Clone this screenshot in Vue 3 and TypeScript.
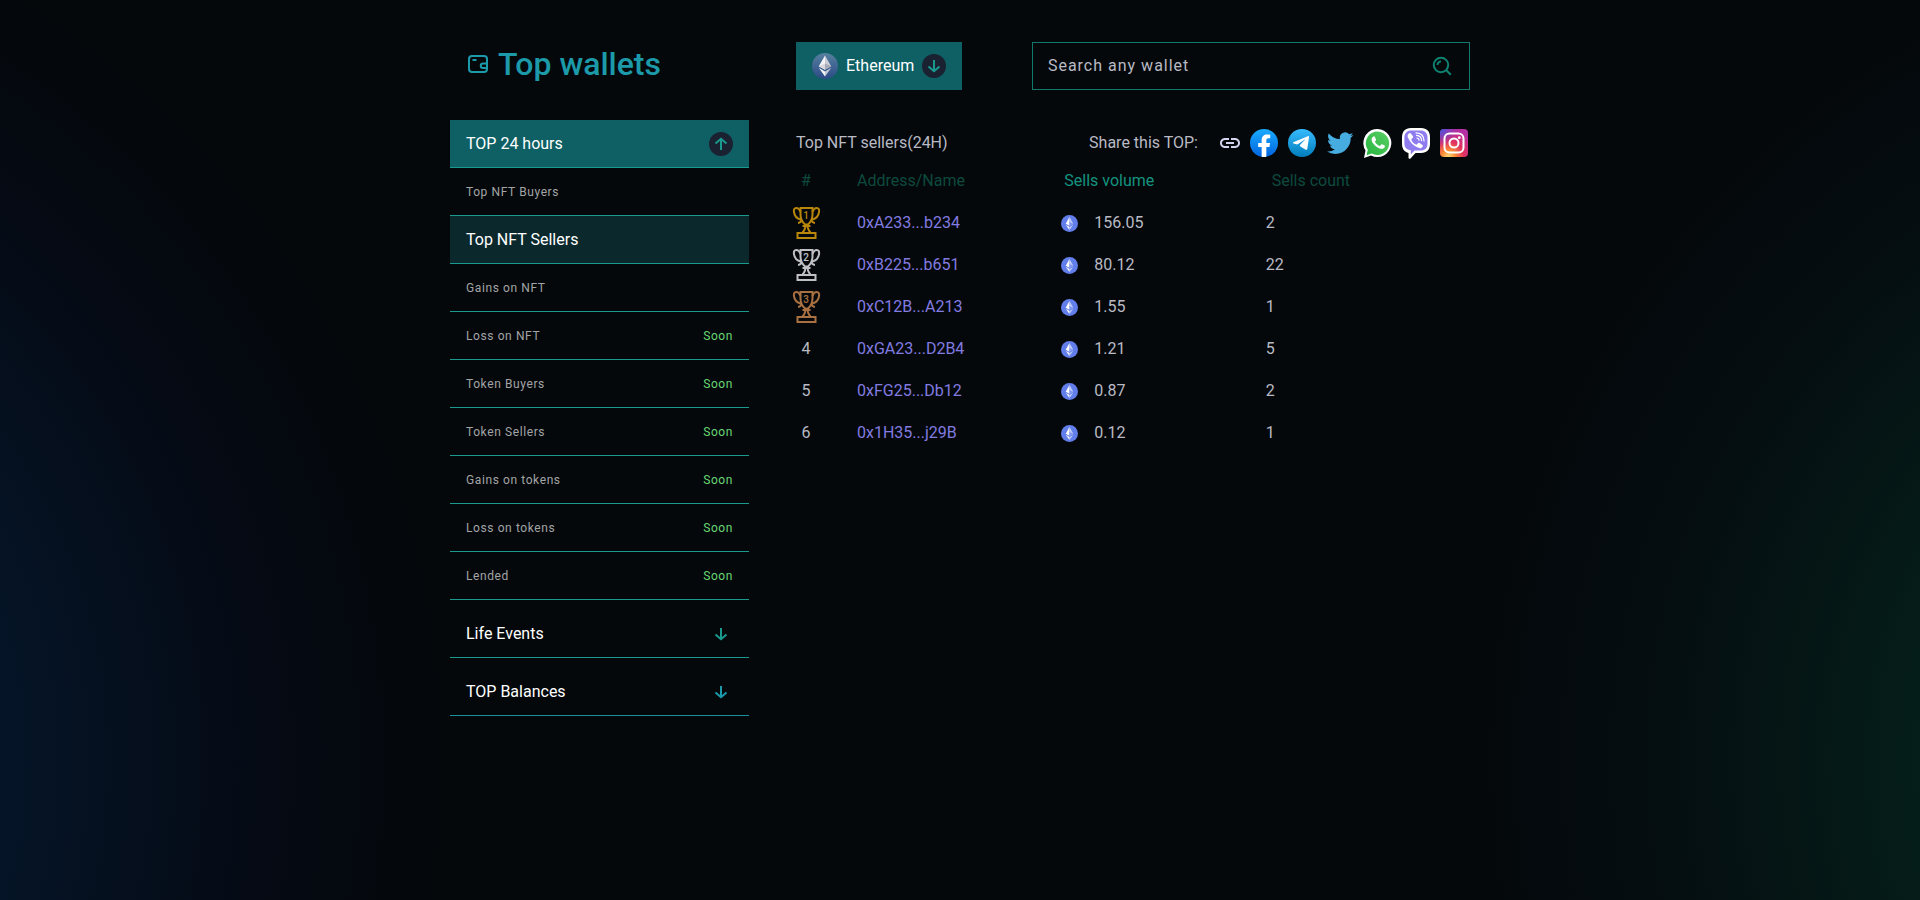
<script setup lang="ts">
import { ref } from 'vue'

interface MenuItem {
  label: string
  soon: boolean
}

interface Wallet {
  rank: number
  address: string
  volume: string
  count: number
}

const items: MenuItem[] = [
  { label: 'Top NFT Buyers', soon: false },
  { label: 'Top NFT Sellers', soon: false },
  { label: 'Gains on NFT', soon: false },
  { label: 'Loss on NFT', soon: true },
  { label: 'Token Buyers', soon: true },
  { label: 'Token Sellers', soon: true },
  { label: 'Gains on tokens', soon: true },
  { label: 'Loss on tokens', soon: true },
  { label: 'Lended', soon: true },
]

const wallets: Wallet[] = [
  { rank: 1, address: '0xA233...b234', volume: '156.05', count: 2 },
  { rank: 2, address: '0xB225...b651', volume: '80.12', count: 22 },
  { rank: 3, address: '0xC12B...A213', volume: '1.55', count: 1 },
  { rank: 4, address: '0xGA23...D2B4', volume: '1.21', count: 5 },
  { rank: 5, address: '0xFG25...Db12', volume: '0.87', count: 2 },
  { rank: 6, address: '0x1H35...j29B', volume: '0.12', count: 1 },
]

const selected = ref('Top NFT Sellers')
const query = ref('')

function select(item: MenuItem) {
  if (!item.soon) selected.value = item.label
}
</script>

<template>
  <div class="page">
    <div class="container">
      <aside class="side">
        <h1 class="title">
          <svg class="title-icon" viewBox="0 0 20 18" aria-hidden="true">
            <rect x="1" y="1" width="18" height="16" rx="3" />
            <path d="M4.500 5h4" />
            <path d="M19 8.500h-4a2.200 2.200 0 0 0 0 4.500h4" />
          </svg>
          Top wallets
        </h1>
        <nav class="menu">
          <button class="group open" type="button" aria-expanded="true">
            TOP 24 hours
            <svg class="arrow" viewBox="0 0 24 24" aria-hidden="true">
              <circle cx="12" cy="12" r="12" />
              <path d="M12 18V7M6.500 11.600L12 6.800l5.500 4.800" />
            </svg>
          </button>
          <a
            v-for="item in items"
            :key="item.label"
            href="#"
            class="item"
            :class="{ selected: item.label === selected }"
            @click.prevent="select(item)"
          >
            {{ item.label }}
            <span v-if="item.soon" class="soon">Soon</span>
          </a>
          <button class="group closed" type="button" aria-expanded="false">
            Life Events
            <svg class="arrow" viewBox="0 0 24 24" aria-hidden="true">
              <path d="M12 6v11M6.500 12.400L12 17.200l5.500-4.800" />
            </svg>
          </button>
          <button class="group closed last" type="button" aria-expanded="false">
            TOP Balances
            <svg class="arrow" viewBox="0 0 24 24" aria-hidden="true">
              <path d="M12 6v11M6.500 12.400L12 17.200l5.500-4.800" />
            </svg>
          </button>
        </nav>
      </aside>

      <main class="main">
        <div class="tools">
          <button class="chain" type="button" aria-haspopup="listbox">
            <svg class="chain-logo" viewBox="0 0 26 26" aria-hidden="true">
              <defs>
                <linearGradient id="chain-bg" x1="0" y1="0" x2="0" y2="1">
                  <stop offset="0" stop-color="#56809f" />
                  <stop offset="1" stop-color="#2c4a86" />
                </linearGradient>
              </defs>
              <circle cx="13" cy="13" r="13" fill="url(#chain-bg)" />
              <path d="M13 2.500L6.800 13.200 13 16.800z" fill="#f4f4f6" />
              <path d="M13 2.500l6.200 10.700L13 16.800z" fill="#c9ccd6" />
              <path d="M13 10.400l-6.200 2.800 6.200 3.600z" fill="#d9dae0" />
              <path d="M13 10.400l6.200 2.800-6.200 3.600z" fill="#a6a9b8" />
              <path d="M6.800 14.800L13 23.500v-5z" fill="#f4f4f6" />
              <path d="M19.200 14.800L13 23.500v-5z" fill="#c9ccd6" />
            </svg>
            Ethereum
            <svg class="arrow" viewBox="0 0 24 24" aria-hidden="true">
              <circle cx="12" cy="12" r="12" />
              <path d="M12 6v11M6.500 12.400L12 17.200l5.500-4.800" />
            </svg>
          </button>
          <form class="search" role="search" @submit.prevent>
            <input v-model="query" type="text" placeholder="Search any wallet" aria-label="Search any wallet" />
            <button type="submit" aria-label="Search">
              <svg viewBox="0 0 24 24" aria-hidden="true">
                <circle cx="11" cy="11" r="7.200" />
                <path d="M16.300 16.300l4.500 4.500M7.500 11A3.500 3.500 0 0 1 11 7.500" />
              </svg>
            </button>
          </form>
        </div>

        <div class="heading">
          <h2>Top NFT sellers(24H)</h2>
          <div class="share">
            <span class="share-label">Share this TOP:</span>
            <button class="link" type="button" aria-label="Copy link">
              <svg viewBox="0 0 24 24">
                <path
                  fill="#d6d3ee"
                  d="M3.900 12c0-1.710 1.390-3.100 3.100-3.100h4V7H7c-2.760 0-5 2.240-5 5s2.240 5 5 5h4v-1.900H7c-1.710 0-3.100-1.390-3.100-3.100zM8 13h8v-2H8v2zm9-6h-4v1.900h4c1.710 0 3.100 1.390 3.100 3.100s-1.390 3.100-3.100 3.100h-4V17h4c2.760 0 5-2.240 5-5s-2.240-5-5-5z"
                />
              </svg>
            </button>
            <a href="#" aria-label="Facebook">
              <svg viewBox="0 0 32 32">
                <defs>
                  <linearGradient id="fb" x1="0" y1="0" x2="0" y2="1">
                    <stop offset="0" stop-color="#18acfe" />
                    <stop offset="1" stop-color="#0163e0" />
                  </linearGradient>
                </defs>
                <circle cx="16" cy="16" r="14" fill="url(#fb)" />
                <path
                  transform="translate(2 2) scale(.778)"
                  fill="#fff"
                  d="M25 23l.8-5H21v-3.500c0-1.400.5-2.500 2.700-2.500H26V7.400c-1.300-.2-2.700-.4-4-.4-4.100 0-7 2.500-7 7v4h-4.500v5H15v12.700c1 .2 2 .3 3 .3s2-.1 3-.3V23h4z"
                />
              </svg>
            </a>
            <a href="#" aria-label="Telegram">
              <svg viewBox="0 0 32 32">
                <defs>
                  <linearGradient id="tg" x1="0" y1="0" x2="0" y2="1">
                    <stop offset="0" stop-color="#37bbfe" />
                    <stop offset="1" stop-color="#007dbb" />
                  </linearGradient>
                </defs>
                <circle cx="16" cy="16" r="14" fill="url(#tg)" />
                <path
                  fill="#fff"
                  d="M22.990 10.150c.1-.7-.57-1.250-1.220-.98L7.370 15.350c-.46.2-.43.880.05 1.030l2.970.94c.57.180 1.180.09 1.680-.25l6.690-4.620c.2-.14.420.150.250.320l-4.820 4.970c-.47.480-.37 1.300.19 1.650l5.390 3.380c.6.380 1.380 0 1.490-.71z"
                />
              </svg>
            </a>
            <a href="#" aria-label="Twitter">
              <svg viewBox="0 0 32 32">
                <path
                  transform="translate(3 3) scale(1.100)"
                  fill="#47acdf"
                  d="M23.953 4.570a10 10 0 01-2.825.775 4.958 4.958 0 002.163-2.723c-.951.555-2.005.959-3.127 1.184a4.920 4.920 0 00-8.384 4.482C7.690 8.095 4.067 6.130 1.640 3.162a4.822 4.822 0 00-.666 2.475c0 1.710.870 3.213 2.188 4.096a4.904 4.904 0 01-2.228-.616v.06a4.923 4.923 0 003.946 4.827 4.996 4.996 0 01-2.212.085 4.936 4.936 0 004.604 3.417 9.867 9.867 0 01-6.102 2.105c-.39 0-.779-.023-1.170-.067a13.995 13.995 0 007.557 2.209c9.053 0 13.998-7.496 13.998-13.985 0-.21 0-.42-.015-.63A9.935 9.935 0 0024 4.590z"
                />
              </svg>
            </a>
            <a href="#" aria-label="WhatsApp">
              <svg viewBox="0 0 32 32">
                <defs>
                  <linearGradient id="wa" x1="1" y1="0" x2="0" y2="1">
                    <stop offset="0" stop-color="#5bd066" />
                    <stop offset="1" stop-color="#27b43e" />
                  </linearGradient>
                </defs>
                <path d="M2 31l1.500-7.500A14 14 0 1 1 9 28.500z" fill="#fff" />
                <path d="M4.600 28.300l1.200-5.500A11.700 11.700 0 1 1 9.700 26.400z" fill="url(#wa)" />
                <path
                  transform="translate(3 2.500) scale(1.100)"
                  fill="#fff"
                  d="M17.472 14.382c-.297-.149-1.758-.867-2.030-.967-.273-.099-.471-.148-.67.15-.197.297-.767.966-.94 1.164-.173.199-.347.223-.644.075-.297-.15-1.255-.463-2.390-1.475-.883-.788-1.480-1.761-1.653-2.059-.173-.297-.018-.458.130-.606.134-.133.298-.347.446-.52.149-.174.198-.298.298-.497.099-.198.050-.371-.025-.52-.075-.149-.669-1.612-.916-2.207-.242-.579-.487-.5-.669-.51-.173-.008-.371-.01-.57-.01-.198 0-.52.074-.792.372-.272.297-1.040 1.016-1.040 2.479 0 1.462 1.065 2.875 1.213 3.074.149.198 2.096 3.200 5.077 4.487.709.306 1.262.489 1.694.625.712.227 1.360.195 1.871.118.571-.085 1.758-.719 2.006-1.413.248-.694.248-1.289.173-1.413-.074-.124-.272-.198-.57-.347"
                />
              </svg>
            </a>
            <a href="#" aria-label="Viber">
              <svg viewBox="0 0 32 32">
                <path
                  fill="#fff"
                  d="M11 1h10c6 0 9 3.500 9 9.500v6c0 6-3 9.500-9 9.500h-5.500L10.500 31.500c-.8.600-2 .2-2-.8V26C4.500 25 2 22 2 16.500v-6C2 4.500 5 1 11 1z"
                />
                <path
                  fill="#8f7df0"
                  d="M11.500 3.400h9c4.600 0 7 2.600 7 7.200v5.800c0 4.700-2.400 7-7 7h-6l-3.700 4v-4.200c-4-.5-6.400-2.600-6.400-6.800v-5.800c0-4.600 2.500-7.200 7.100-7.200z"
                />
                <path
                  fill="#fff"
                  d="M9.300 6.300c.6-.4 1.200-.2 1.600.3l2 2.700c.4.600.3 1.200-.3 1.700l-1 .9c-.3.300-.4.700-.2 1.200.9 2.200 2.400 3.600 4.500 4.500.5.200.9.100 1.200-.3l.8-1c.5-.6 1.100-.7 1.700-.3l2.800 1.900c.6.400.7 1 .3 1.600-.9 1.400-2.100 2.200-3.600 1.600-5.600-2.300-9.500-6-11.400-11.200-.4-1.500.3-2.800 1.600-3.600z"
                />
                <path
                  fill="none"
                  stroke="#fff"
                  stroke-width="1.200"
                  stroke-linecap="round"
                  d="M16 5.800c5 .2 8 3.200 8 8.200M16.500 8.400c3.200.2 5 2 5.100 5.200M17 11c1.300.1 2 .8 2.100 2.100"
                />
              </svg>
            </a>
            <a href="#" aria-label="Instagram">
              <svg viewBox="0 0 32 32">
                <defs>
                  <radialGradient id="ig" cx="0.300" cy="1" r="1">
                    <stop offset="0" stop-color="#ffdd76" />
                    <stop offset="0.250" stop-color="#fb8a35" />
                    <stop offset="0.550" stop-color="#e2325f" />
                    <stop offset="1" stop-color="#b52fa4" />
                  </radialGradient>
                  <radialGradient id="ig-top" cx="0" cy="0" r="0.650">
                    <stop offset="0" stop-color="#3b5be0" />
                    <stop offset="1" stop-color="#7a3ad0" stop-opacity="0" />
                  </radialGradient>
                </defs>
                <rect x="2" y="2" width="28" height="28" rx="4" fill="url(#ig)" />
                <rect x="2" y="2" width="28" height="28" rx="4" fill="url(#ig-top)" />
                <g fill="none" stroke="#fff" stroke-width="2">
                  <rect x="6.500" y="6.500" width="19" height="19" rx="5" />
                  <circle cx="16" cy="16" r="4.500" />
                </g>
                <circle cx="21.300" cy="10.700" r="1.400" fill="#fff" />
              </svg>
            </a>
          </div>
        </div>

        <table class="table">
          <colgroup>
            <col class="col-rank" />
            <col />
            <col />
            <col />
          </colgroup>
          <thead>
            <tr>
              <th scope="col"><span class="rank">#</span></th>
              <th scope="col">Address/Name</th>
              <th scope="col" class="volume" aria-sort="descending">Sells volume</th>
              <th scope="col" class="count">Sells count</th>
            </tr>
          </thead>
          <tbody>
            <tr v-for="w in wallets" :key="w.rank">
              <td>
                <svg v-if="w.rank <= 3" class="trophy" :class="'place-' + w.rank" viewBox="0 0 32 32">
                  <path d="M10.500 1h12v6.500c0 5-1.800 7.500-4.500 10h-3c-2.700-2.500-4.500-5-4.500-10z" />
                  <path d="M10.500 5C9.600 2.500 8.300 1 6.300 1 4.300 1 3.700 2.600 3.900 4.600c.4 4 2.700 7 7.300 8.200" />
                  <path d="M22.500 5c.9-2.500 2.200-4 4.200-4s2.600 1.600 2.400 3.600c-.4 4-2.700 7-7.300 8.200" />
                  <path d="M11.700 12.800c-.4 2-1.500 3-3.700 3.100M21.300 12.800c.4 2 1.500 3 3.700 3.100" />
                  <path d="M12.500 19h8M15.300 17.500c.3 3.500-.7 6-2.800 8M17.700 17.500c-.3 3.500.7 6 2.800 8" />
                  <path d="M7.500 26h18v5h-18z" />
                  <text x="16" y="12">{{ w.rank }}</text>
                </svg>
                <span v-else class="rank">{{ w.rank }}</span>
              </td>
              <td><a href="#" class="address">{{ w.address }}</a></td>
              <td>
                <span class="amount">
                  <svg class="coin" viewBox="0 0 18 18" aria-hidden="true">
                    <circle cx="9" cy="9" r="9" fill="#627eea" />
                    <path d="M9 2L5 9.200l4 2.300z" fill="#fff" />
                    <path d="M9 2l4 7.200-4 2.300z" fill="#c0cbf7" />
                    <path d="M5 10.200L9 16v-3.400z" fill="#fff" />
                    <path d="M13 10.200L9 16v-3.400z" fill="#c0cbf7" />
                    <path d="M9 7.400l4 1.800-4 2.300z" fill="#8197ee" />
                  </svg>
                  {{ w.volume }}
                </span>
              </td>
              <td>{{ w.count }}</td>
            </tr>
          </tbody>
        </table>
      </main>
    </div>
  </div>
</template>

<style>
body {
  margin: 0;
  background: #04080b;
}
</style>

<style scoped>
.page {
  box-sizing: border-box;
  min-height: 100vh;
  padding: 42px 24px;
  background:
    radial-gradient(circle 900px at -455px 760px, #051528 50%, #050a14 80%, transparent),
    radial-gradient(circle 840px at calc(100% + 390px) 760px, #051e19 46%, #050d10 80%, transparent),
    #04080b;
  color: #b9bac4;
  font: 16px/24px Roboto, 'Liberation Sans', sans-serif;
}

button,
input {
  font: inherit;
  color: inherit;
  border: 0;
  background: none;
  padding: 0;
}

button {
  cursor: pointer;
}

a {
  color: inherit;
  text-decoration: none;
}

svg {
  display: block;
  flex: none;
}

.container {
  display: grid;
  grid-template-columns: 299px 1fr;
  gap: 47px;
  max-width: 1020px;
  margin: 0 auto;
}

.title {
  display: flex;
  align-items: center;
  gap: 10px;
  height: 44px;
  margin: 0 0 34px;
  padding-left: 18px;
  color: #1c9aaa;
  font-size: 32px;
  font-weight: 500;
}

.title-icon {
  width: 20px;
  height: 18px;
  fill: none;
  stroke: currentColor;
  stroke-width: 2;
}

.menu {
  display: flex;
  flex-direction: column;
}

.group,
.item {
  box-sizing: border-box;
  display: flex;
  align-items: center;
  justify-content: space-between;
  min-height: 48px;
  padding: 0 16px;
  border-bottom: 1px solid #1a998e;
}

.group {
  color: #fff;
  text-align: left;
}

.group.open {
  background: #0e6064;
}

.group.closed {
  min-height: 58px;
  padding-top: 10px;
}

.group.last {
  border-color: #1c8f9f;
}

.item {
  color: #a3a4a6;
  font-size: 12px;
  letter-spacing: 0.05em;
}

.item.selected {
  background: #0b292d;
  color: #fff;
  font-size: 16px;
  letter-spacing: normal;
}

.soon {
  color: #68d673;
}

.arrow {
  width: 24px;
  height: 24px;
  fill: none;
  stroke: #1a998e;
  stroke-width: 2;
}

.arrow circle {
  fill: #1a2130;
  stroke: none;
}

.last .arrow {
  stroke: #1c9aaa;
}

.tools {
  display: flex;
  justify-content: space-between;
}

.chain {
  display: flex;
  align-items: center;
  gap: 8px;
  height: 48px;
  padding: 0 16px;
  background: #0e6064;
  color: #fff;
}

.chain-logo {
  width: 26px;
  height: 26px;
}

.search {
  box-sizing: border-box;
  display: flex;
  align-items: center;
  width: 65%;
  height: 48px;
  padding: 0 15px;
  border: 1px solid #0f7a6c;
}

.search input {
  flex: 1;
  min-width: 0;
  outline: none;
  letter-spacing: 1px;
}

.search input::placeholder {
  color: #b9bac4;
  opacity: 1;
}

.search svg {
  width: 24px;
  height: 24px;
  fill: none;
  stroke: #0f8272;
  stroke-width: 2;
}

.heading {
  display: flex;
  align-items: center;
  justify-content: space-between;
  margin-top: 37px;
}

.heading h2 {
  margin: 0;
  font-size: 16px;
  font-weight: 400;
}

.share {
  display: flex;
  align-items: center;
  gap: 6px;
}

.share-label {
  margin-right: 14px;
}

.share a svg {
  width: 32px;
  height: 32px;
}

.link svg {
  width: 24px;
  height: 24px;
}

.table {
  width: calc(100% + 6px);
  margin: 1px 0 0 -6px;
  border-collapse: collapse;
  table-layout: fixed;
}

.table tr {
  height: 42px;
}

.col-rank {
  width: 67px;
}

th,
td {
  padding: 0;
  text-align: left;
  vertical-align: middle;
}

th {
  color: #0d4a3e;
  font-weight: 400;
}

th.volume {
  padding-left: 3px;
  color: #14937f;
}

th.count {
  padding-left: 6px;
}

.rank {
  display: block;
  width: 32px;
  text-align: center;
}

.address {
  color: #827be0;
}

.amount {
  display: flex;
  align-items: center;
  gap: 16px;
}

.coin {
  width: 17px;
  height: 17px;
}

.trophy {
  width: 32px;
  height: 32px;
  fill: none;
  stroke: currentColor;
  stroke-width: 2;
}

.trophy text {
  fill: currentColor;
  stroke: none;
  font-size: 10px;
  font-weight: 500;
  text-anchor: middle;
}

.place-1 {
  color: #b8860b;
}

.place-2 {
  color: #c0c0c4;
}

.place-3 {
  color: #a97142;
}
</style>
